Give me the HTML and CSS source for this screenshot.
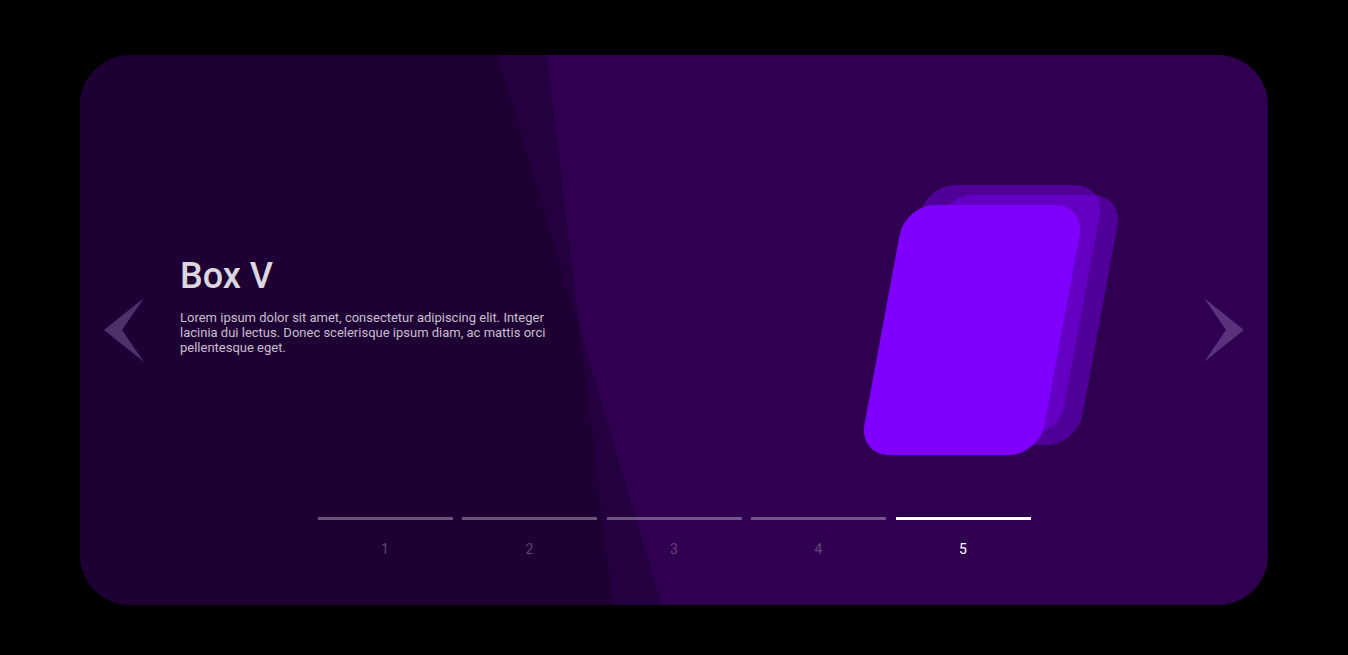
FILE: index.html
```html
<!DOCTYPE html>
<html lang="en">
<head>
  <meta charset="UTF-8">
  <meta name="viewport" content="width=device-width, initial-scale=1.0">
  <title>Box Slider</title>
  <link rel="stylesheet" href="styles.css">
</head>
<body>
  <div class="slider">
    <!-- two see-through wedges that darken the left side -->
    <div class="shade shade-a"></div>
    <div class="shade shade-b"></div>

    <div class="stage">
      <button class="arrow prev" aria-label="Previous">
        <svg viewBox="0 0 40 64" width="40" height="64"><polygon points="40,0 0,32 40,64 18,32"/></svg>
      </button>

      <div class="copy">
        <h1 class="title">Box V</h1>
        <p class="text">Lorem ipsum dolor sit amet, consectetur adipiscing elit. Integer lacinia dui lectus. Donec scelerisque ipsum diam, ac mattis orci pellentesque eget.</p>
      </div>

      <div class="boxes">
        <div class="box back one"></div>
        <div class="box back two"></div>
        <div class="box front"></div>
      </div>

      <button class="arrow next" aria-label="Next">
        <svg viewBox="0 0 40 64" width="40" height="64"><polygon points="0,0 40,32 0,64 22,32"/></svg>
      </button>
    </div>

    <div class="pager">
      <div class="page"><span class="bar"></span><span class="num">1</span></div>
      <div class="page"><span class="bar"></span><span class="num">2</span></div>
      <div class="page"><span class="bar"></span><span class="num">3</span></div>
      <div class="page"><span class="bar"></span><span class="num">4</span></div>
      <div class="page active"><span class="bar"></span><span class="num">5</span></div>
    </div>
  </div>
</body>
</html>
```

FILE: styles.css
```css
body {
  margin: 0;
  height: 655px;
  background: #000;
  font-family: Roboto, "Liberation Sans", Arial, sans-serif;
}

.slider {
  position: relative;
  width: 1188px;
  height: 550px;
  margin: 55px auto 0;
  background: #2e004f;
  border-radius: 50px;
  overflow: hidden;
  display: flex;
  flex-direction: column;
}

/* background wedges */
.shade {
  position: absolute;
  inset: 0;
  background: rgba(0, 0, 0, 0.18);
}

.shade-a { clip-path: polygon(0 0, 418px 0, 582px 100%, 0 100%); }
.shade-b { clip-path: polygon(0 0, 467px 0, 533px 100%, 0 100%); }

.stage {
  position: relative;
  flex: 1;
  display: flex;
  align-items: center;
  padding: 88px 24px 0;
}

.arrow {
  flex: none;
  padding: 0;
  border: 0;
  background: none;
  cursor: pointer;
  display: flex;
}

.arrow svg { fill: rgba(215, 190, 255, 0.26); }

.copy {
  width: 372px;
  margin-left: 36px;
  margin-bottom: 50px;
}

.title {
  margin: 0;
  font-size: 36px;
  font-weight: 500;
  line-height: 42px;
  color: rgba(255, 255, 255, 0.86);
}

.text {
  margin: 13px 0 0;
  font-size: 13px;
  line-height: 15px;
  color: rgba(255, 255, 255, 0.76);
}

/* stacked cards */
.boxes {
  position: relative;
  width: 280px;
  height: 300px;
  margin-left: auto;
  margin-right: 74px;
}

.box {
  position: absolute;
  width: 180px;
  height: 250px;
  border-radius: 30px;
  transform: skewX(-10.5deg);
}

.back { background: rgba(128, 0, 255, 0.42); }
.one { left: 52px; top: 5px; }
.two { left: 70px; top: 15px; }

.front {
  left: 32px;
  top: 25px;
  background: #8000ff;
}

/* pagination */
.pager {
  position: relative;
  display: flex;
  justify-content: center;
  gap: 9.5px;
  padding: 0 0 48px;
}

.page {
  width: 135px;
  display: flex;
  flex-direction: column;
  align-items: center;
}

.bar {
  align-self: stretch;
  height: 3px;
  background: rgba(255, 255, 255, 0.33);
}

.num {
  margin-top: 21px;
  font-size: 14px;
  line-height: 16px;
  color: rgba(255, 255, 255, 0.28);
}

.page.active .bar { background: #fff; }
.page.active .num { color: #fff; }
```
